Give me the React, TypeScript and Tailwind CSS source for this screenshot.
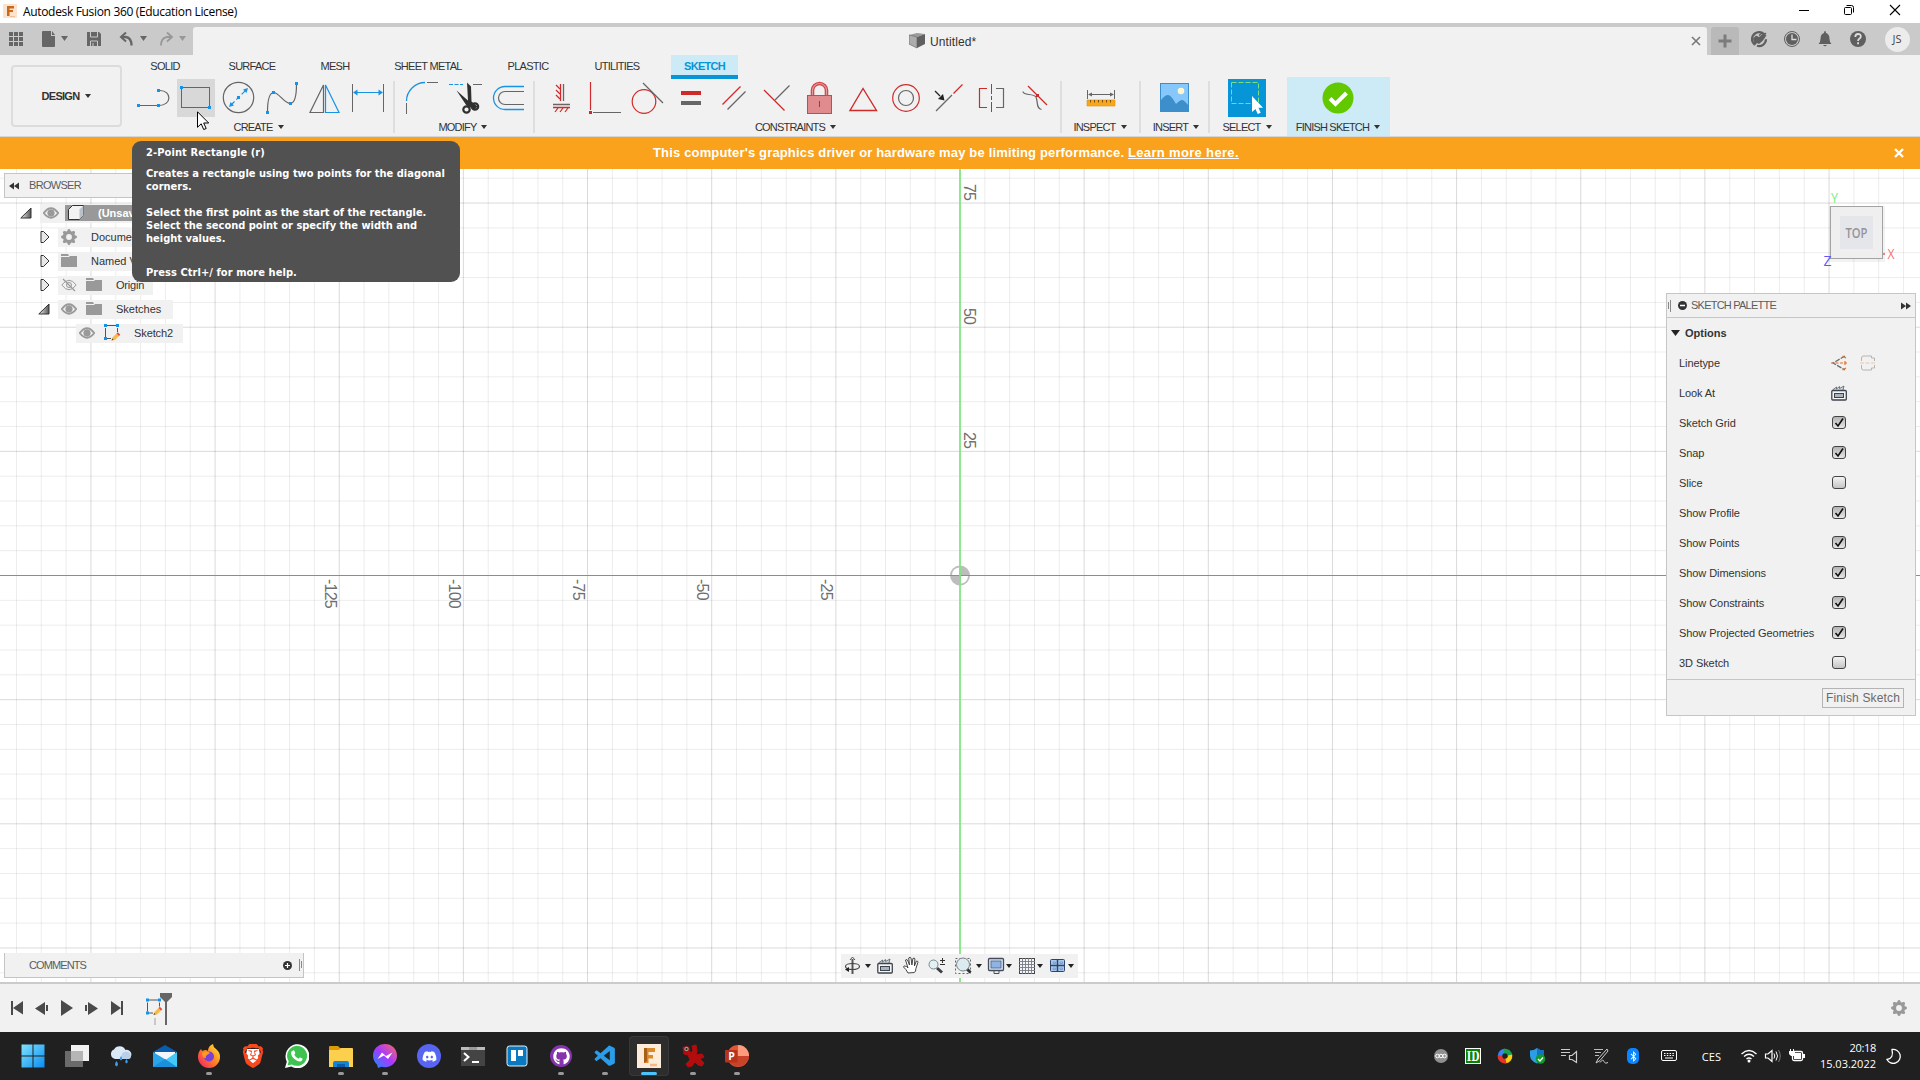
import type { ReactNode } from "react";
import { FaDiscord, FaGithub, FaBluetoothB } from "react-icons/fa6";
import { SiBrave } from "react-icons/si";
import { VscVscode } from "react-icons/vsc";
import { BsGearFill } from "react-icons/bs";

const GRAY = "#666666";
const BLUE = "#1793e6";
const RED = "#cf2a2a";

/** Icon whose viewBox [x, y, width, height] also sets its size. */
function Pic({ b, className, children }: { b: number[]; className?: string; children: ReactNode }) {
  return (
    <svg viewBox={b.join(" ")} width={b[2]} height={b[3]} fill="none" className={className ?? "block shrink-0"}>
      {children}
    </svg>
  );
}

function Sq({ x, y, c = BLUE }: { x: number; y: number; c?: string }) {
  return <rect x={x - 1.5} y={y - 1.5} width="3" height="3" fill={c} />;
}

function Caret({ className }: { className?: string }) {
  return (
    <svg viewBox="0 0 6 4" width="6" height="4" className={className ?? "fill-[#333]"}>
      <path d="M0 0h6L3 4z" />
    </svg>
  );
}

/* ---------- title bar and document tabs ---------- */

function TitleBar() {
  return (
    <div className="flex h-[23px] items-center bg-white pr-px">
      <Pic b={[0, 0, 23, 23]}>
        <rect x="3" y="4" width="14" height="14" fill="#fbe3cf" />
        <path d="M7 16V6h7v2.500H9.500V10h3.500v2H9.500v4z" fill="#c8691c" />
        <path d="M10 16.500h5" stroke="#eebf98" />
      </Pic>
      <span className="font-['Open_Sans',sans-serif] text-[12px] leading-none tracking-[-0.33px] text-black">Autodesk Fusion 360 (Education License)</span>
      <div className="ml-auto flex">
        <Pic b={[1781, 0, 46, 23]}><path d="M1799 10.500h10" stroke="#000" /></Pic>
        <Pic b={[1827, 0, 46, 23]}>
          <rect x="1844.500" y="7.500" width="7" height="7" rx="1" stroke="#000" />
          <path d="M1846.500 5.500h5q2 0 2 2v5" stroke="#000" />
        </Pic>
        <Pic b={[1873, 0, 46, 23]}><path d="M1890 5l10 10M1900 5l-10 10" stroke="#000" strokeWidth="1.100" /></Pic>
      </div>
    </div>
  );
}

function DocumentBar() {
  return (
    <div className="flex h-8 items-end bg-[#cacaca]">
      <Pic b={[0, 27, 32, 28]}>
        {[9, 14, 19].map((x) => [32, 37, 42].map((y) => <rect key={`${x}-${y}`} x={x} y={y} width="4" height="4" fill={GRAY} />))}
      </Pic>
      <Pic b={[32, 27, 43, 28]}>
        <path d="M43 31h8v5h4v10q0 1-1 1H43q-1 0-1-1V32q0-1 1-1zM52 31l3 4h-3z" fill={GRAY} />
        <path d="M61 36h7l-3.500 5z" fill={GRAY} />
      </Pic>
      <Pic b={[75, 27, 37, 28]}>
        <path d="M87 32h12l2 2v12H87z" fill={GRAY} />
        <path d="M90.500 32v5h7v-5M90.500 46v-5h7v5" stroke="#cacaca" />
        <path d="M93 43v3" stroke="#cacaca" />
      </Pic>
      <Pic b={[112, 27, 41, 28]}>
        <path d="M126 32.500l-5 4.500 5 4.500" stroke={GRAY} strokeWidth="2" />
        <path d="M121 37h5q5.500 1 5.500 8.500" stroke={GRAY} strokeWidth="2.300" />
        <path d="M140 36h7l-3.500 5z" fill={GRAY} />
      </Pic>
      <Pic b={[153, 27, 40, 28]}>
        <path d="M167 32.500l5 4.500-5 4.500" stroke="#989898" strokeWidth="1.800" />
        <path d="M172 37h-5q-6 1-6 8.500" stroke="#989898" strokeWidth="1.800" />
        <path d="M179 36h7l-3.500 5z" fill="#989898" />
      </Pic>
      <div className="flex h-7 w-[1514px] items-center rounded-t-[3px] bg-[#f1f1f1]">
        <div className="ml-[716px] flex items-center">
          <Pic b={[909, 33, 16, 16]}>
            <path d="M909 35l8-2 8 1-8 3z" fill="#9a9a9a" />
            <path d="M909 35l8 2v11l-8-4z" fill="#adadad" stroke="#6a6a6a" strokeWidth=".7" />
            <path d="M917 37l8-3v10l-8 4z" fill="#606060" />
          </Pic>
          <span className="ml-[5px] pt-px font-['Liberation_Sans',sans-serif] text-[12px] leading-none tracking-[0.1px] text-[#333]">Untitled*</span>
        </div>
        <Pic b={[1690, 35, 12, 12]} className="ml-auto mr-[5px] block"><path d="M1692 37l8 8M1700 37l-8 8" stroke="#777" strokeWidth="1.600" /></Pic>
      </div>
      <div className="ml-1 flex h-7 w-7 items-center justify-center rounded-t-[3px] bg-[#b9b9b9]">
        <Pic b={[0, 0, 14, 14]}><path d="M7 .5v13M.5 7h13" stroke="#7c7c7c" strokeWidth="3" /></Pic>
      </div>
      <div className="ml-1 flex">
        <Pic b={[1743, 27, 33, 28]}>
          <path d="M1754.500 44.500a7 7 0 1 1 11-8M1757 45.800a7 7 0 0 0 9-6.500" stroke="#5f5f5f" strokeWidth="2.200" />
          <path d="M1753 38.500l3-3 3 1.500 3.500-3 3 3-3 4-3.500 3-2-1-2.500 3z" fill="#5f5f5f" />
          <path d="M1761 37.500l5-4.500M1759 35.500l4-3.500" stroke="#5f5f5f" strokeWidth="1.400" />
        </Pic>
        <Pic b={[1776, 27, 33, 28]}>
          <circle cx="1792" cy="39" r="7.500" stroke="#5f5f5f" />
          <circle cx="1792" cy="39" r="6" fill="#5f5f5f" />
          <path d="M1792 34.500v5h4.500" stroke="#ddd" strokeWidth="1.300" />
        </Pic>
        <Pic b={[1809, 27, 33, 28]}>
          <path d="M1818.500 44q2-2 2-5 0-5 3.500-6 0-2 1-2t1 2q3.500 1 3.500 6 0 3 2 5zM1823 45h4q-2 2.500-4 0z" fill="#5f5f5f" />
        </Pic>
        <Pic b={[1842, 27, 33, 28]}>
          <circle cx="1858" cy="39" r="8" fill="#5f5f5f" />
          <path d="M1855.300 37q0-3 2.800-3t2.700 2.500q0 1.500-1.500 2.300-1.200.7-1.200 2.200M1858.100 42.300v2" stroke="#dedede" strokeWidth="1.800" />
        </Pic>
        <div className="flex w-[45px] items-start justify-center">
          <div className="-ml-px flex h-[25px] w-[25px] items-center justify-center rounded-full bg-[#ececec] font-['Open_Sans',sans-serif] text-[11px] text-[#444]">JS</div>
        </div>
      </div>
    </div>
  );
}

/* ---------- ribbon ---------- */

type Glyph = { b: number[]; hot?: boolean; art: ReactNode };

const createIcons: Glyph[] = [
  {
    b: [134, 79, 38, 38],
    art: (
      <>
        <path d="M138 105.500h21C172 105.500 172 90.500 160 90.500" stroke={GRAY} strokeWidth="1.200" />
        <Sq x={138.5} y={105.5} /><Sq x={158.5} y={90.5} /><Sq x={158.5} y={105.5} />
      </>
    ),
  },
  {
    b: [177, 79, 38, 38],
    hot: true,
    art: (
      <>
        <rect x="181.500" y="87.500" width="28" height="20" stroke={GRAY} />
        <Sq x={181.5} y={87.5} /><Sq x={209.5} y={107.5} />
      </>
    ),
  },
  {
    b: [220, 79, 38, 38],
    art: (
      <>
        <circle cx="238.500" cy="97.500" r="15.200" stroke={GRAY} strokeWidth="1.200" />
        <path d="M231 105l15-15" stroke={BLUE} strokeWidth="1.200" strokeDasharray="5 2.500" />
        <path d="M248 88l-1.500 5-3.500-3.500zM229 107l1.500-5 3.500 3.500z" fill={BLUE} />
        <Sq x={238.5} y={97.5} />
      </>
    ),
  },
  {
    b: [263, 79, 38, 38],
    art: (
      <>
        <path d="M267.500 112C267.500 98 270 93 273.500 92.500C279 92.500 284 103.500 290.500 103.500C295 103 296.500 95 296.500 84" stroke={GRAY} strokeWidth="1.200" />
        <Sq x={267.5} y={112.5} /><Sq x={273.5} y={92.5} /><Sq x={290.5} y={103.5} /><Sq x={296.5} y={83.5} />
      </>
    ),
  },
  {
    b: [306, 79, 38, 38],
    art: (
      <>
        <path d="M323.500 85v27.500h-13.500z" stroke={GRAY} strokeWidth="1.200" />
        <path d="M325.500 85v27.500H339z" stroke={BLUE} strokeWidth="1.200" />
      </>
    ),
  },
  {
    b: [349, 79, 38, 38],
    art: (
      <>
        <path d="M352.500 84v28M383.500 84v28" stroke={GRAY} />
        <path d="M355 92.500h26" stroke={BLUE} />
        <path d="M353 92.500l4.500-3v6zM383 92.500l-4.500-3v6z" fill={BLUE} />
      </>
    ),
  },
];

const modifyIcons: Glyph[] = [
  {
    b: [403, 79, 38, 38],
    art: (
      <>
        <path d="M406.500 101C406.500 91 415 82.500 425 82.500" stroke={BLUE} strokeWidth="1.300" />
        <path d="M427 82.500h11M406.500 103v11" stroke={GRAY} />
      </>
    ),
  },
  {
    b: [446, 79, 38, 38],
    art: (
      <>
        <path d="M449 84.500h14" stroke={BLUE} strokeDasharray="4 1.500" />
        <path d="M473 84.500h9" stroke={GRAY} />
        <path d="M456.500 90.500l11.500 10-1-18 4 4 .5 15 6 5-3 3-8-4z" fill="#303030" />
        <circle cx="466.500" cy="109.500" r="3.200" stroke="#303030" strokeWidth="2.200" />
        <circle cx="475" cy="106.500" r="3.200" stroke="#303030" strokeWidth="2.200" />
      </>
    ),
  },
  {
    b: [489, 79, 38, 38],
    art: (
      <>
        <path d="M524 86.500H505a11.500 11.500 0 0 0 0 23h19" stroke={BLUE} strokeWidth="1.300" />
        <path d="M524 91.500H505a6.500 6.500 0 0 0 0 13h19" stroke={GRAY} strokeWidth="1.200" />
      </>
    ),
  },
];

const constraintIcons: Glyph[] = [
  {
    b: [542, 79, 38, 38],
    art: (
      <>
        <path d="M560.500 84v17M553 107.500h17" stroke={RED} strokeWidth="1.300" />
        <path d="M563.500 84v17M553 104.500h17" stroke={GRAY} strokeWidth="1.300" />
        <path d="M556 85l4 4M556 90l4 4M556 95l4 4M558 108l-3 4M563 108l-3 4M568 108l-3 4" stroke={RED} strokeWidth="1.200" />
      </>
    ),
  },
  {
    b: [585, 79, 38, 38],
    art: (
      <>
        <path d="M590.500 82v28" stroke={RED} strokeWidth="1.200" />
        <path d="M593 112.500h28" stroke={GRAY} />
        <Sq x={590.5} y={112.5} c={RED} />
      </>
    ),
  },
  {
    b: [628, 79, 38, 38],
    art: (
      <>
        <circle cx="644" cy="101.500" r="11.800" stroke={RED} strokeWidth="1.200" />
        <path d="M643 83l20 20" stroke={GRAY} strokeWidth="1.200" />
      </>
    ),
  },
  {
    b: [671, 79, 38, 38],
    art: (
      <>
        <path d="M681 91h20v4h-20z" fill={RED} />
        <path d="M681 101h20v4h-20z" fill={GRAY} />
      </>
    ),
  },
  {
    b: [714, 79, 38, 38],
    art: (
      <>
        <path d="M722.500 104.500l18-18" stroke={RED} strokeWidth="1.200" />
        <path d="M727.500 109.500l18-18" stroke={GRAY} strokeWidth="1.200" />
      </>
    ),
  },
  {
    b: [757, 79, 38, 38],
    art: (
      <>
        <path d="M764 90l20.500 20.500" stroke={RED} strokeWidth="1.200" />
        <path d="M775 100l14.500-14.500" stroke={GRAY} strokeWidth="1.200" />
      </>
    ),
  },
  {
    b: [800, 79, 38, 38],
    art: (
      <>
        <path d="M812.500 95v-4.500a7 7 0 0 1 14 0V95" stroke="#cf4548" strokeWidth="3.600" />
        <path d="M812.500 95v-4.500a7 7 0 0 1 14 0V95" stroke="#e39a9b" strokeWidth="1.200" />
        <rect x="807.500" y="95.500" width="24" height="18" fill="#e08b8d" stroke="#cf4548" />
        <path d="M819.500 101v6" stroke="#a33" />
      </>
    ),
  },
  { b: [843, 79, 38, 38], art: <path d="M863 88.500l-13 22h26.500z" stroke={RED} strokeWidth="1.400" /> },
  {
    b: [886, 79, 38, 38],
    art: (
      <>
        <circle cx="906" cy="98" r="13.300" stroke={RED} strokeWidth="1.200" />
        <circle cx="906" cy="98" r="7.500" stroke={GRAY} strokeWidth="1.200" />
      </>
    ),
  },
  {
    b: [929, 79, 38, 38],
    art: (
      <>
        <path d="M953.500 93.500l9-9" stroke={RED} strokeWidth="1.200" />
        <path d="M936 111l16-16" stroke={GRAY} strokeWidth="1.200" />
        <path d="M935 91l5 5" stroke="#222" strokeWidth="1.300" />
        <path d="M944.500 100.500l-1.500-6.500-5 5z" fill="#222" />
      </>
    ),
  },
  {
    b: [972, 79, 38, 38],
    art: (
      <>
        <path d="M987 88.500h-7.500v19h7.500" stroke={RED} strokeWidth="1.200" />
        <path d="M991.500 84v10M991.500 96v4M991.500 102v10" stroke={RED} />
        <path d="M996 88.500h7.500v19H996" stroke={GRAY} strokeWidth="1.200" />
      </>
    ),
  },
  {
    b: [1015, 79, 38, 38],
    art: (
      <>
        <path d="M1028 86l19 19" stroke={RED} strokeWidth="1.200" />
        <path d="M1023 91.500C1023 96 1033 93 1036 97C1038 101 1036 109 1041.500 109.500" stroke={GRAY} strokeWidth="1.200" />
        <Sq x={1037.5} y={95.5} c={RED} />
      </>
    ),
  },
];

const inspectIcon: Glyph[] = [
  {
    b: [1081, 79, 38, 38],
    art: (
      <>
        <path d="M1087.500 90v9M1114.500 90v9M1090 94.500h22" stroke={GRAY} />
        <path d="M1088 94.500l4-2v4zM1114 94.500l-4-2v4z" fill={GRAY} />
        <path d="M1087 100h28v6h-28z" fill="#faa61a" stroke="#e09000" strokeWidth=".6" />
        <path d="M1090.500 100v2.500M1094.500 100v2.500M1098.500 100v2.500M1102.500 100v2.500M1106.500 100v2.500M1110.500 100v2.500" stroke="#6b4a10" strokeWidth=".9" />
      </>
    ),
  },
];

const insertIcon: Glyph[] = [
  {
    b: [1156, 79, 38, 38],
    art: (
      <>
        <rect x="1160.500" y="83.500" width="28" height="28" fill="#86c8fb" stroke="#3c8fca" />
        <path d="M1161 100q4-5 7-5t8 9q4-4 6-4t6 5v6.500h-27z" fill="#3c8fca" />
        <circle cx="1181" cy="91" r="3.300" fill="#fdf6cf" />
      </>
    ),
  },
];

const selectIcon: Glyph[] = [
  {
    b: [1228, 79, 38, 38],
    art: (
      <>
        <rect x="1228" y="79" width="38" height="38" fill="#0696d7" />
        <rect x="1231.500" y="82.500" width="27" height="21" stroke="#7be07b" strokeDasharray="5 2" />
        <path d="M1252 96v16l3.500-3 2.200 5 3-1.200-2.200-5h4.500z" fill="#fff" />
      </>
    ),
  },
];

const finishIcon: Glyph[] = [
  {
    b: [1319, 79, 38, 38],
    art: (
      <>
        <circle cx="1338" cy="98" r="15.500" fill="#62c800" />
        <path d="M1330 98.500l5.500 5.500 11-11" stroke="#fff" strokeWidth="4" />
      </>
    ),
  },
];

function Group({ icons, label, width, shift = "" }: { icons: Glyph[]; label: string; width: string; shift?: string }) {
  return (
    <div className={`flex shrink-0 flex-col items-center ${width}`}>
      <div className="flex h-[38px] gap-[5px]">
        {icons.map((g, i) => (
          <div key={i} className={g.hot ? "bg-[#d8d8d8]" : ""}>
            <Pic b={g.b}>{g.art}</Pic>
          </div>
        ))}
      </div>
      <div className={`mt-[5px] flex items-center gap-[5px] leading-none ${shift}`}>
        <span className="whitespace-nowrap font-['Liberation_Sans',sans-serif] text-[11px] leading-none tracking-[-0.8px] text-[#333]">{label}</span>
        <Caret className="mb-[2px] fill-[#333]" />
      </div>
    </div>
  );
}

function Sep({ className }: { className: string }) {
  return <div className={`mt-[2px] h-[52px] w-[2px] shrink-0 bg-[#dedede] ${className}`} />;
}

const tabs = [
  { t: "SOLID", c: "ml-0 w-[66px]" },
  { t: "SURFACE", c: "ml-[16px] w-[76px]" },
  { t: "MESH", c: "ml-[10px] w-[70px]" },
  { t: "SHEET METAL", c: "ml-[10px] w-[96px]" },
  { t: "PLASTIC", c: "ml-[14px] w-[76px]" },
  { t: "UTILITIES", c: "ml-[10px] w-[82px]" },
];

function Ribbon() {
  return (
    <div className="flex h-[82px] border-b border-[#d6d6d6] bg-[#f1f1f1]">
      <div className="w-[132px] shrink-0 pl-[11px] pt-[10px]">
        <div className="flex h-[62px] w-[111px] items-center justify-center gap-[6px] rounded-[4px] border-2 border-[#dcdcdc]">
          <span className="font-['Liberation_Sans',sans-serif] text-[11px] font-bold leading-none tracking-[-0.7px] text-[#333]">DESIGN</span>
          <Caret />
        </div>
      </div>
      <div className="min-w-0 flex-1">
        <div className="flex h-6 font-['Liberation_Sans',sans-serif] text-[11px] leading-none tracking-[-0.72px] text-[#333]">
          {tabs.map((x) => (
            <div key={x.t} className={`flex shrink-0 items-center justify-center pb-[2px] ${x.c}`}>{x.t}</div>
          ))}
          <div className="ml-[13px] flex h-6 w-[67px] items-center justify-center border-b-4 border-[#0696d7] bg-[#cdeaf7] pt-[2px] font-bold text-[#0696d7]">SKETCH</div>
        </div>
        <div className="flex">
          <Group icons={createIcons} label="CREATE" width="w-[257px]" shift="-ml-[4px]" />
          <Sep className="ml-[4px]" />
          <Group icons={modifyIcons} label="MODIFY" width="ml-[8px] w-[124px]" shift="-ml-[4px]" />
          <Sep className="ml-[6px]" />
          <Group icons={constraintIcons} label="CONSTRAINTS" width="ml-[7px] w-[511px]" shift="-ml-[4px]" />
          <Sep className="ml-[7px]" />
          <Group icons={inspectIcon} label="INSPECT" width="w-[76px]" />
          <Sep className="ml-px" />
          <Group icons={insertIcon} label="INSERT" width="-mr-px w-[68px]" shift="ml-[2px]" />
          <Sep className="" />
          <Group icons={selectIcon} label="SELECT" width="w-[74px]" />
          <div className="-mt-[2px] ml-[3px] h-[59px] w-[103px] bg-[#cdeaf7] pt-[2px]">
            <Group icons={finishIcon} label="FINISH SKETCH" width="w-[102px]" />
          </div>
        </div>
      </div>
    </div>
  );
}

function WarningBar() {
  return (
    <div className="flex h-8 items-center bg-[#faa21b] font-['Liberation_Sans',sans-serif] text-[13px] font-bold leading-none text-white">
      <span className="-mt-[2px] ml-[653px] whitespace-pre tracking-[0.16px]">This computer's graphics driver or hardware may be limiting performance. <span className="tracking-[0.34px] underline">Learn more here.</span></span>
      <Pic b={[0, 0, 10, 10]} className="ml-auto mr-[16px] block"><path d="M1 1l8 8M9 1l-8 8" stroke="#fff" strokeWidth="2.400" /></Pic>
    </div>
  );
}

/* ---------- sketch canvas ---------- */

const STEP = 24.83;
const columns = Array.from({ length: 77 }, (_, i) => i - 38);
const rows = Array.from({ length: 33 }, (_, i) => i - 16);

function GridCanvas() {
  return (
    <svg viewBox="0 169 1920 813" width="1920" height="813" className="block">
      <rect x="0" y="169" width="1920" height="813" fill="#fff" />
      {columns.map((n) => (
        <path key={n} d={`M${960 + n * STEP} 169v813`} stroke="#000" strokeOpacity={n % 5 ? 0.075 : 0.15} />
      ))}
      {rows.map((n) => (
        <path key={n} d={`M0 ${575.5 + n * STEP}h1920`} stroke="#000" strokeOpacity={n % 5 ? 0.075 : 0.15} />
      ))}
      <circle cx="960" cy="575.500" r="10" fill="#bdbdbd" />
      <path d="M959 567.500v7.500h-7a7.500 7.500 0 0 1 7-7.500zM961 583.500v-7.500h7a7.500 7.500 0 0 1-7 7.500z" fill="#fff" />
      <path d="M0 575.500h1920" stroke="#dc6a6a" />
      <path d="M960 169v813" stroke="#7fe87f" strokeWidth="2" strokeOpacity=".85" />
      <g fill="#6e6e6e" fontFamily="Liberation Sans, sans-serif" fontSize="16" letterSpacing="-0.8">
        <text transform="translate(964 184) rotate(90)">75</text>
        <text transform="translate(964 308) rotate(90)">50</text>
        <text transform="translate(964 432) rotate(90)">25</text>
        <text transform="translate(821 579) rotate(90)">-25</text>
        <text transform="translate(697 579) rotate(90)">-50</text>
        <text transform="translate(573 579) rotate(90)">-75</text>
        <text transform="translate(449 579) rotate(90)">-100</text>
        <text transform="translate(325 579) rotate(90)">-125</text>
      </g>
    </svg>
  );
}

function Eye({ off }: { off?: boolean }) {
  return (
    <Pic b={[0, 0, 16, 16]}>
      <path d="M.8 8Q8-1.500 15.200 8 8 17.500.8 8z" stroke="#999" strokeWidth={off ? 1 : 2} />
      <circle cx="8" cy="8" r={off ? 2.5 : 3.2} fill={off ? "none" : "#999"} stroke="#999" />
      {off && <path d="M2 2l12 12" stroke="#999" strokeWidth="1.200" />}
    </Pic>
  );
}

function Folder() {
  return (
    <Pic b={[0, 0, 16, 14]}>
      <path d="M0 0h7l1 2H0zM0 3h8l1 -1h7v11H0z" fill="#999" />
    </Pic>
  );
}

function SketchArt() {
  return (
    <>
      <path d="M2.500 4v9M4 1.500h9M14.500 4v4M4 14.500h4" stroke="#555" />
      <Sq x={2.5} y={1.5} /><Sq x={14.5} y={1.5} /><Sq x={2.5} y={14.5} />
      <path d="M8.500 16.500l1-3 4-4 2.500 2.500-4 4z" fill="#f8b84a" />
      <path d="M13.500 9.500l1.300-1.300 2.500 2.500L16 12z" fill="#e8434a" />
      <path d="M8.500 16.500l.8-2 1.300 1.300z" fill="#444" />
    </>
  );
}

function Open() {
  return (
    <svg viewBox="0 0 12 12" width="12" height="12">
      <defs><linearGradient id="tri" x1="0" x2="1"><stop offset="0" stopColor="#eee" /><stop offset="1" stopColor="#555" /></linearGradient></defs>
      <path d="M11 1v10H.8z" fill="url(#tri)" stroke="#333" />
    </svg>
  );
}

function Closed() {
  return (
    <svg viewBox="0 0 10 14" width="10" height="14">
      <path d="M1 1.500h2.500L9 7l-5.500 5.500H1z" fill="#e8e8e8" stroke="#333" />
    </svg>
  );
}

function Row({ indent, toggle, bg, children }: { indent: string; toggle: ReactNode; bg: string; children: ReactNode }) {
  return (
    <div className="flex h-6 items-center">
      <div className={`flex shrink-0 items-center ${indent}`}>{toggle}</div>
      <div className={`flex h-[19px] items-center overflow-hidden whitespace-nowrap bg-[#f1f1f1] ${bg}`}>{children}</div>
    </div>
  );
}

function Browser() {
  return (
    <div className="absolute left-0 top-[4px] w-[304px] font-['Liberation_Sans',sans-serif] text-[11px] leading-none text-[#333]">
      <div className="ml-1 flex h-[25px] items-center border border-[#c4c4c4] bg-[#f1f1f1] pl-[4px]">
        <Pic b={[0, 0, 10, 8]}><path d="M5 .5v7L0 4zM10 .5v7L5 4z" fill="#333" /></Pic>
        <span className="ml-[10px] tracking-[-0.7px] text-[#5c5c5c]">BROWSER</span>
      </div>
      <div className="pt-[3px]">
        <Row indent="w-10 pl-5" toggle={<Open />} bg="w-[92px] pl-[3px]">
          <Eye />
          <div className="ml-[6px] flex h-4 min-w-0 flex-1 items-center bg-[#999] pl-[3px]">
            <Pic b={[0, 0, 16, 16]}><path d="M.5 4.500l4-4h11v10l-4 4H.5z" fill="#f3f3f3" stroke="#333" /><path d="M11.500 14.500v-10l4-4v10z" fill="#b9c0c8" /></Pic>
            <span className="ml-[14px] font-bold text-white">(Unsaved)</span>
          </div>
        </Row>
        <Row indent="w-[58px] pl-10" toggle={<Closed />} bg="w-[74px] pl-[3px]">
          <BsGearFill size={16} color="#999" className="shrink-0" /><span className="ml-[14px]">Document Settings</span>
        </Row>
        <Row indent="w-[58px] pl-10" toggle={<Closed />} bg="w-[74px] pl-[3px]">
          <Folder /><span className="ml-[14px]">Named Views</span>
        </Row>
        <Row indent="w-[58px] pl-10" toggle={<Closed />} bg="w-[95px] pl-[3px]">
          <Eye off /><div className="ml-[9px]"><Folder /></div><span className="ml-[14px] tracking-[-0.2px]">Origin</span>
        </Row>
        <Row indent="w-[58px] pl-[38px]" toggle={<Open />} bg="w-[115px] pl-[3px]">
          <Eye /><div className="ml-[9px]"><Folder /></div><span className="ml-[14px]">Sketches</span>
        </Row>
        <Row indent="w-[76px]" toggle={null} bg="w-[107px] pl-[3px]">
          <Eye /><div className="ml-[8px]"><Pic b={[0, 0, 18, 18]}><SketchArt /></Pic></div><span className="ml-[13px] tracking-[-0.1px]">Sketch2</span>
        </Row>
      </div>
    </div>
  );
}

function Check({ on }: { on: boolean }) {
  return (
    <div className={`-mt-px h-[13px] w-[14px] rounded-[3px] border border-[#444] bg-gradient-to-b ${on ? "from-[#b4b4b4] to-[#e6e6e6]" : "from-[#f4f4f4] to-[#c4c4c4]"}`}>
      {on && <Pic b={[0, 0, 12, 11]}><path d="M2.500 6l2.500 3L10 1.500" stroke="#111" strokeWidth="1.600" /></Pic>}
    </div>
  );
}

function LookAt() {
  return (
    <Pic b={[0, 0, 16, 16]}>
      <path d="M1.500 5l4-3 0 2 3-2.500v2L13 1l-1 4" fill="#cfd6dc" stroke="#555d66" strokeWidth=".8" />
      <rect x=".8" y="5.500" width="14.500" height="9.500" rx="1" fill="#f6f6f6" stroke="#3e444d" strokeWidth="1.300" />
      <rect x="3.500" y="8.500" width="9" height="4" fill="#a9b4be" stroke="#3e444d" />
    </Pic>
  );
}

const options: [string, boolean][] = [
  ["Sketch Grid", true],
  ["Snap", true],
  ["Slice", false],
  ["Show Profile", true],
  ["Show Points", true],
  ["Show Dimensions", true],
  ["Show Constraints", true],
  ["Show Projected Geometries", true],
  ["3D Sketch", false],
];

function Palette() {
  return (
    <div className="absolute left-[1666px] top-[124px] h-[423px] w-[250px] border border-[#c6c6c6] bg-[#f1f1f1] font-['Liberation_Sans',sans-serif] text-[11px] leading-none text-[#333]">
      <div className="flex h-6 items-center border-b border-[#c6c6c6] pl-[1px] pr-[4px]">
        <Pic b={[0, 0, 4, 12]}><path d="M.5 2v7M2.500 0v12" stroke="#888" /></Pic>
        <Pic b={[0, 0, 9, 9]} className="ml-[6px] block"><circle cx="4.500" cy="4.500" r="4.500" fill="#333" /><path d="M2 4.500h5" stroke="#fff" strokeWidth="1.500" /></Pic>
        <span className="ml-1 tracking-[-0.77px] text-[#5c5c5c]">SKETCH PALETTE</span>
        <Pic b={[0, 0, 10, 8]} className="ml-auto block"><path d="M0 .5v7L5 4zM5 .5v7L10 4z" fill="#333" /></Pic>
      </div>
      <div className="flex h-[30px] items-center pl-1">
        <Pic b={[0, 0, 9, 6]}><path d="M0 0h9L4.500 6z" fill="#222" /></Pic>
        <span className="ml-[5px] font-bold">Options</span>
      </div>
      <div className="flex h-[30px] items-center pl-3">
        <span className="w-[152px] tracking-[-0.08px]">Linetype</span>
        <Pic b={[0, 0, 16, 16]}><path d="M14 1L2 8l12 7" stroke="#6a6a6a" strokeWidth="1.200" strokeDasharray="5 1.200" /><path d="M0 8h16" stroke="#e8691a" strokeWidth="1.200" strokeDasharray="3 1.500" /><path d="M11.500 1l3.500 2M11.500 15l3.500-2M14 6v4" stroke="#e8691a" strokeWidth="1.100" /></Pic>
        <Pic b={[0, 0, 16, 16]} className="ml-[13px] block"><path d="M1.500 6V3q0-2 2-2h8v2h3v3M1.500 10v3q0 2 2 2h8v-2h3v-3" stroke="#b4b4b4" /><path d="M0 8h16" stroke="#f6c49c" strokeDasharray="4 1.500" /></Pic>
      </div>
      <div className="flex h-[30px] items-center pl-3">
        <span className="w-[152px] tracking-[-0.1px]">Look At</span>
        <LookAt />
      </div>
      {options.map(([t, on]) => (
        <div key={t} className="flex h-[30px] items-center pl-3">
          <div className="w-[153px] tracking-[-0.07px]">{t}</div>
          <Check on={on} />
        </div>
      ))}
      <div className="mt-[1px] flex h-[37px] items-center justify-end border-t border-[#c6c6c6] pr-[11px]">
        <div className="flex h-5 w-[82px] items-center justify-center border border-[#b4b4b4] text-[12px] tracking-[0.15px] text-[#6a6a6a]">Finish Sketch</div>
      </div>
    </div>
  );
}

function ViewCube() {
  return (
    <div className="absolute left-[1820px] top-[20px]">
      <Pic b={[1820, 189, 80, 85]}>
        <rect x="1829" y="206" width="56" height="56" fill="#000" opacity=".05" />
        <rect x="1830.500" y="206.500" width="52" height="52" fill="#efefef" stroke="#a3a3a3" />
        <rect x="1840" y="216" width="33" height="33" fill="#e5e6ea" />
        <g fontFamily="Open Sans, sans-serif" textAnchor="middle">
          <text x="1856.500" y="237.500" fontSize="14" fontWeight="600" fill="#93949b" textLength="22" lengthAdjust="spacingAndGlyphs">TOP</text>
          <text x="1834.500" y="203" fontSize="14" fill="#78f078" textLength="7" lengthAdjust="spacingAndGlyphs">Y</text>
          <text x="1891" y="259" fontSize="14" fill="#f57272" textLength="7" lengthAdjust="spacingAndGlyphs">X</text>
          <text x="1827.500" y="266" fontSize="14" fill="#5c5cf8" textLength="8" lengthAdjust="spacingAndGlyphs">Z</text>
        </g>
        <path d="M1883 254h2" stroke="#f58080" strokeWidth="2" />
      </Pic>
    </div>
  );
}

function Comments() {
  return (
    <div className="absolute left-1 top-[784px] flex h-[25px] w-[300px] items-center border border-t-0 border-[#c4c4c4] bg-[#f1f1f1] pl-[24px] font-['Liberation_Sans',sans-serif] text-[11px] leading-none tracking-[-0.9px] text-[#5c5c5c]">
      <span>COMMENTS</span>
      <Pic b={[0, 0, 9, 9]} className="ml-auto block"><circle cx="4.500" cy="4.500" r="4.500" fill="#333" /><path d="M2 4.500h5M4.500 2v5" stroke="#fff" strokeWidth="1.200" /></Pic>
      <Pic b={[0, 0, 4, 12]} className="ml-[7px] block"><path d="M.5 0v12M2.500 2v7" stroke="#888" /></Pic>
    </div>
  );
}

function NavBar() {
  return (
    <div className="absolute left-[841px] top-[785px] flex h-6 w-[237px] bg-[#f1f1f1]">
      <Pic b={[841, 954, 33, 24]}>
        <path d="M852.500 959v15" stroke="#555" strokeWidth="2" /><path d="M850 960l2.500-3 2.500 3" stroke="#555" />
        <ellipse cx="852.500" cy="966.500" rx="7" ry="3" stroke="#444" strokeWidth="1.200" />
        <path d="M845 969.500l4-2.500v5z" fill="#222" /><path d="M865 964h6l-3 4z" fill="#222" />
      </Pic>
      <div className="flex w-[24px] items-center pl-[3px]"><LookAt /></div>
      <Pic b={[898, 954, 26, 24]}>
        <path d="M908 973q-2-4-4.500-6 0-2 3-.5l1.500 1.500-2.500-8q1.500-1.500 2.500 1l1.500 4-.8-7q1.800-1.500 2.300 0l.9 7 1-6.500q2-1 2 .5l-.5 7 2-5q2 0 1.500 1.500l-2 6q0 3-1.500 4z" fill="#fff" stroke="#444" />
      </Pic>
      <Pic b={[924, 954, 27, 24]}>
        <path d="M937 968l5 4.500" stroke="#3a3f48" strokeWidth="3" /><circle cx="933.500" cy="964.500" r="4.500" fill="#e2f1f4" stroke="#7b8a92" />
        <path d="M942.500 958v5M940 960.500h5M940 964.500h5" stroke="#333" />
      </Pic>
      <Pic b={[951, 954, 33, 24]}>
        <rect x="955.500" y="958.500" width="15" height="15" stroke="#666" strokeDasharray="2 2" />
        <path d="M966 968l4.500 4.500" stroke="#333" strokeWidth="3" /><circle cx="963" cy="964.500" r="6.500" fill="#dcebed" stroke="#77858c" /><path d="M976 964h6l-3 4z" fill="#222" />
      </Pic>
      <Pic b={[984, 954, 31, 24]}>
        <rect x="988.500" y="958.500" width="15" height="12" rx="1" fill="#dfe6f0" stroke="#444c5c" strokeWidth="1.300" /><rect x="991" y="961" width="10" height="7" fill="#8fb4e2" stroke="#3f5f95" strokeWidth=".8" />
        <path d="M994 971v2.500h5V971" stroke="#444c5c" /><path d="M1006 964h6l-3 4z" fill="#222" />
      </Pic>
      <Pic b={[1015, 954, 31, 24]}>
        <rect x="1019.500" y="958.500" width="15" height="15" fill="#f6f6f8" stroke="#444" />
        <path d="M1022.500 958v16M1025.500 958v16M1028.500 958v16M1031.500 958v16M1019 961.500h16M1019 964.500h16M1019 967.500h16M1019 970.500h16" stroke="#777b88" strokeWidth=".9" /><path d="M1037 964h6l-3 4z" fill="#222" />
      </Pic>
      <Pic b={[1046, 954, 32, 24]}>
        <rect x="1050.500" y="959.500" width="14" height="12" rx="1" fill="#a9c8ee" stroke="#2f4468" />
        <path d="M1057.500 959v13M1050 965.500h15" stroke="#2f4468" strokeWidth="1.500" />
        <path d="M1053 962h2.500v1.500H1053zM1060 962h2.500v1.500h-2.500zM1053 968h2.500v1.500H1053zM1060 968h2.500v1.500h-2.500z" stroke="#6f98cf" strokeWidth=".8" /><path d="M1068 964h6l-3 4z" fill="#222" />
      </Pic>
    </div>
  );
}

function Tooltip() {
  return (
    <div className="absolute left-[132px] top-[141px] h-[141px] w-[328px] rounded-[9px] bg-[#515151] pl-[14px] pt-[5px] font-['DejaVu_Sans_Condensed','DejaVu_Sans',sans-serif] text-[11px] font-bold leading-[13px] text-white [font-stretch:condensed]">
      <p className="tracking-[0.1px]">2-Point Rectangle (r)</p>
      <p className="mt-[8px] whitespace-nowrap">Creates a rectangle using two points for the diagonal<br />corners.</p>
      <p className="mt-[13px] whitespace-nowrap">Select the first point as the start of the rectangle.<br />Select the second point or specify the width and<br />height values.</p>
      <p className="mt-[21px] tracking-[0.06px]">Press Ctrl+/ for more help.</p>
    </div>
  );
}

/* ---------- timeline and taskbar ---------- */

function Timeline() {
  return (
    <div className="flex h-[50px] items-start border-t-2 border-[#cbcbcb] bg-[#f1f1f1]">
      <Pic b={[0, 984, 180, 48]}>
        <g fill="#4a4a4a">
          <path d="M11 1001h2v14h-2zM23 1001v13.500l-10-6.500z" />
          <path d="M45 1002v13l-10-6.500zM46 1005h2v6h-2z" />
          <path d="M61 1000v16l12-8z" />
          <path d="M88 1002v13l10-6.500zM85 1005h2v6h-2z" />
          <path d="M111 1001v14l10-7zM121 1001h2v14h-2z" />
        </g>
        <g transform="translate(145 998.500)"><SketchArt /></g>
        <path d="M155 1018v7" stroke="#c8c8c8" strokeWidth="2" />
        <path d="M160 993h12v4l-5 5h-2l-5-5z" fill="#666" />
        <path d="M166 1000v25" stroke="#666" strokeWidth="2" />
      </Pic>
      <BsGearFill size={16} color="#999" className="ml-auto mr-[13px] mt-4" />
    </div>
  );
}

function TaskButton({ running, active, children }: { running?: boolean; active?: boolean; children: ReactNode }) {
  return (
    <div className={`relative mx-[2px] flex h-10 w-10 items-center justify-center rounded ${active ? "bg-[#2d2d2d] ring-1 ring-inset ring-[#383838]" : ""}`}>
      {children}
      {running && <span className="absolute bottom-[1px] h-[3px] w-[6px] rounded-full bg-[#999]" />}
      {active && <span className="absolute bottom-[1px] h-[3px] w-4 rounded-full bg-[#4cc2ff]" />}
    </div>
  );
}

function Taskbar() {
  return (
    <div className="flex h-12 items-center bg-[#202020] pl-[11px] text-white">
      <TaskButton><Pic b={[0, 0, 24, 24]}><defs><linearGradient id="win" x2="1" y2="1"><stop stopColor="#7fe3ff" /><stop offset="1" stopColor="#0a8cf0" /></linearGradient></defs><path d="M.5.500h11v11H.5zM12.500.500h11v11h-11zM.5 12.500h11v11H.5zM12.500 12.500h11v11h-11z" fill="url(#win)" /></Pic></TaskButton>
      <TaskButton><Pic b={[0, 0, 24, 24]}><path d="M6 1h18v16H6z" fill="#f2f2f2" /><path d="M0 7h18v16H0z" fill="#6b6b6b" /><path d="M6 7h12v10H6z" fill="#b5b5b5" /></Pic></TaskButton>
      <TaskButton><Pic b={[0, 0, 24, 24]}><path d="M6 15a5 5 0 0 1-1-9.500A6.500 6.500 0 0 1 16.500 6 4.500 4.500 0 0 1 19 15z" fill="#dbe8f6" /><path d="M14 15a4 4 0 0 1 1-7 5 5 0 0 1 7 4 3 3 0 0 1-2 3z" fill="#b9d0ea" /><path d="M12 12q2.500 3.500 0 4.500-2.500-1 0-4.500zM7.500 17q3 4 0 5.500-3-1.500 0-5.500zM17.500 15q2.500 3.500 0 4.500-2.500-1 0-4.500z" fill="#3f9be8" /></Pic></TaskButton>
      <TaskButton><Pic b={[0, 0, 24, 24]}><path d="M0 8l12-7 12 7v4H0z" fill="#0b5cab" /><path d="M2 8h20v9H2z" fill="#f4f7fa" /><path d="M0 8l15 9-5 6H0z" fill="#2aa5ea" /><path d="M24 8L8 19l6 4h10z" fill="#45c8f5" /><path d="M0 23l12-8 12 8z" fill="#1b8fdc" /></Pic></TaskButton>
      <TaskButton running><Pic b={[0, 0, 24, 24]}><defs><linearGradient id="fox" x1="1" x2="0" y2="1"><stop stopColor="#fff04a" /><stop offset=".45" stopColor="#ff8a1e" /><stop offset="1" stopColor="#f2146e" /></linearGradient></defs><path d="M1 13q0-5 3-8l1 2q2-1 4-1l2 1q0-5 5-7 0 3 3 5 4 3 4 8a11 11 0 0 1-22 0z" fill="url(#fox)" /><circle cx="12" cy="12.500" r="5" fill="#7a3fd4" /><path d="M5 9q5-3 8 0l-3 2q-2 1-1 3-4 0-4-5z" fill="#ff9a22" /></Pic></TaskButton>
      <TaskButton>
        <div className="grid place-items-center">
          <Pic b={[0, 0, 24, 24]} className="col-start-1 row-start-1 block"><path d="M6 5h12l1 6-2 6-5 4-5-4-2-6z" fill="#fff" /></Pic>
          <SiBrave size={24} color="#f8481e" className="col-start-1 row-start-1" />
        </div>
      </TaskButton>
      <TaskButton><Pic b={[0, 0, 24, 24]}><path d="M0 24l1.800-6.300A12 12 0 1 1 6.300 22.500z" fill="#fff" /><path d="M2.500 21.500l1.200-4.200a10 10 0 1 1 3.200 3.100z" fill="#3ec250" /><path d="M8 6.500q1-.5 1.500.5l.8 2q0 .6-1 1.700 1.500 3 4.300 4 .8-1.300 1.400-1.300l2.500 1.200q.2 2.500-2.700 3-3-.2-6-3-2.800-3-2.800-5.500 0-1.800 2-2.600z" fill="#fff" /></Pic></TaskButton>
      <TaskButton running><Pic b={[0, 0, 24, 24]}><path d="M0 3q0-1 1-1h8l2 2v4H0z" fill="#dd9a06" /><path d="M0 6h10l1.500-2H23q1 0 1 1v18H0z" fill="#fcd04c" /><path d="M4 23v-4q0-2 2-2h12q2 0 2 2v4z" fill="#1483d8" /><path d="M8 20h8v3H8z" fill="#0a5ca8" /></Pic></TaskButton>
      <TaskButton running>
        <svg width="24" height="24" viewBox="0 0 24 24">
          <defs><linearGradient id="msg" x1="1" x2="0" y2="1"><stop stopColor="#ff6a60" /><stop offset=".5" stopColor="#a838ff" /><stop offset="1" stopColor="#1090ff" /></linearGradient></defs>
          <path d="M12 0c6.800 0 12 4.900 12 11.600s-5.200 11.600-12 11.600c-1.300 0-2.500-.2-3.600-.5L5 24l-1-3.500C1.500 18.400 0 15.300 0 11.600 0 4.900 5.200 0 12 0z" fill="url(#msg)" />
          <path d="M4.500 15l4.500-6.500 4 3.500 6.500-3.500-4.500 6.500-4-3.500z" fill="#fff" />
        </svg>
      </TaskButton>
      <TaskButton><div className="flex h-6 w-6 items-center justify-center rounded-full bg-[#5865f2]"><FaDiscord size={15} /></div></TaskButton>
      <TaskButton><Pic b={[0, 0, 24, 24]}><rect y="3" width="24" height="19" fill="#444" /><path d="M0 3h24v3H0z" fill="#bbb" /><path d="M8 3h8v3H8z" fill="#999" /><path d="M3 9l4.500 4L3 17M11 18h7" stroke="#fff" strokeWidth="2" /></Pic></TaskButton>
      <TaskButton><Pic b={[0, 0, 24, 24]}><rect x="2" y="2" width="20" height="20" rx="2.500" fill="#0a79bf" stroke="#e6f2fa" /><path d="M6 6h5v11H6zM13 6h5v6h-5z" fill="#fff" /></Pic></TaskButton>
      <TaskButton running><div className="flex h-[22px] w-[22px] items-center justify-center rounded-full bg-[#8534ad]"><FaGithub size={17} /></div></TaskButton>
      <TaskButton running><VscVscode size={25} color="#2a9ce8" /></TaskButton>
      <TaskButton active><Pic b={[0, 0, 24, 24]}><path d="M0 0h24v24H0z" fill="#fdecd9" /><path d="M7 19V4h11v4h-6.500v3H16v3.500h-4.500V19z" fill="#d98a2c" /><path d="M7 19V4h3v13z" fill="#a95f14" /><path d="M13 21h7" stroke="#f0b98a" strokeWidth="2.500" /></Pic></TaskButton>
      <TaskButton running><Pic b={[0, 0, 24, 24]}><path d="M2 3l4 1 3 4q2 1 3-1l-1-5 4-1 1 6-1 4 6-1 2 3-4 2 4 4-2 3-4-1-3-3-3 4-4 1-2-3 4-4-2-5-4-1z" fill="#b30c0c" stroke="#b30c0c" strokeLinejoin="round" /><circle cx="5.500" cy="5" r="2.800" fill="#999" stroke="#a00" /><circle cx="5.500" cy="5" r="1" fill="#222" /></Pic></TaskButton>
      <TaskButton running><Pic b={[0, 0, 24, 24]}><circle cx="13" cy="12" r="11" fill="#e0583a" /><path d="M13 1a11 11 0 0 1 11 11H13z" fill="#ff9a7c" /><path d="M2 12h22a11 11 0 0 1-21 4z" fill="#c8432a" /><rect y="6" width="12.500" height="12.500" rx="1" fill="#b7331c" /><text x="3.300" y="16" fill="#fff" fontSize="10.500" fontWeight="700" fontFamily="Open Sans, sans-serif">P</text></Pic></TaskButton>

      <div className="ml-auto flex items-center pr-[15px]">
        <Pic b={[1425, 1040, 32, 32]}><circle cx="1441" cy="1056" r="7" fill="#8f8f8f" /><circle cx="1437.500" cy="1056" r="1.800" stroke="#fff" /><circle cx="1441" cy="1056" r="1.800" stroke="#fff" /><circle cx="1444.500" cy="1056" r="1.800" stroke="#fff" /></Pic>
        <Pic b={[1457, 1040, 32, 32]}><rect x="1465.500" y="1048.500" width="15" height="15" fill="#0a830a" stroke="#fff" /><text x="1466.800" y="1060.500" fill="#fff" fontSize="12" fontWeight="700" fontFamily="DejaVu Serif, serif" textLength="12.500" lengthAdjust="spacingAndGlyphs">ID</text></Pic>
        <Pic b={[1489, 1040, 32, 32]}>
          <g strokeWidth="4.500"><path d="M1500 1056a5 5 0 0 1 5-5" stroke="#3b82f0" /><path d="M1504 1051a5 5 0 0 1 6 5" stroke="#18a34a" /><path d="M1510 1055a5 5 0 0 1-5 6" stroke="#ffcc10" /><path d="M1506 1061a5 5 0 0 1-6-5.500" stroke="#e5352b" /></g>
        </Pic>
        <Pic b={[1521, 1040, 32, 32]}><path d="M1537 1048q3 2.500 7 2.500v5q0 5-7 8-7-3-7-8v-5q4 0 7-2.500z" fill="#2a9fe8" /><path d="M1537 1048q3 2.500 7 2.500v5h-7z" fill="#1470c8" /><circle cx="1540.500" cy="1059" r="4.800" fill="#129a2c" /><path d="M1538 1059l2 2 3-3.500" stroke="#fff" strokeWidth="1.300" /></Pic>
        <Pic b={[1553, 1040, 32, 32]}><path d="M1561 1049.500h9M1561 1052.500h9M1561 1055.500h5" stroke="#ccc" strokeWidth="1.200" /><path d="M1569.500 1055.500h2.500l4.500-4v11l-4.500-3h-2.500z" stroke="#ccc" strokeWidth="1.200" /></Pic>
        <Pic b={[1585, 1040, 32, 32]}><path d="M1594 1049.500h9M1595 1052.500h6M1595 1055.500h4" stroke="#bbb" /><path d="M1607 1049l-9 10-2 4 4-2.500 8-9.500zM1600 1062.500q3-4 4-1t4 1" stroke="#ccc" /></Pic>
        <div className="flex w-8 justify-center"><div className="flex h-4 w-3 items-center justify-center rounded-[5px] bg-[#0a84ff]"><FaBluetoothB size={11} /></div></div>
        <Pic b={[1649, 1040, 40, 32]}><rect x="1661.500" y="1050.500" width="15" height="10" rx="1.500" stroke="#fff" /><path d="M1664 1053.500h10M1664 1055.500h10" stroke="#fff" strokeDasharray="1.500 1.300" /><path d="M1665 1058h8" stroke="#fff" /></Pic>
        <div className="w-11 pl-px text-center font-['Open_Sans',sans-serif] text-[11px] leading-none tracking-[0.2px]">CES</div>
        <div className="ml-1 flex">
          <Pic b={[1737, 1040, 24, 32]}><path d="M1741.500 1054q7.500-7 15 0M1744 1056.500q5-4.500 10 0M1746.500 1059q2.500-2 5 0" stroke="#fff" strokeWidth="1.400" /><circle cx="1749" cy="1061" r="1.500" fill="#fff" /></Pic>
          <Pic b={[1761, 1040, 24, 32]}><path d="M1765.500 1054h2.500l4-3.500v11l-4-3.500h-2.500z" stroke="#fff" strokeWidth="1.200" /><path d="M1774 1053.500q1.500 2.500 0 5M1776 1051.500q3 4.500 0 9" stroke="#fff" /><path d="M1778.500 1050q3.500 6 0 12" stroke="#777" /></Pic>
          <Pic b={[1785, 1040, 24, 32]}><rect x="1792.500" y="1051.500" width="10" height="9" rx="1.500" stroke="#fff" strokeWidth="1.300" /><path d="M1794 1053h7v6h-7zM1803 1054h2v4h-2zM1789 1051h6v3l-2 2h-2l-2-2zM1790 1049h1v2h-1zM1793 1049h1v2h-1z" fill="#fff" /></Pic>
        </div>
        <div className="w-[67px] text-right font-['Open_Sans',sans-serif] text-[11px] leading-4"><span className="tracking-[-0.3px]">20:18</span><br />15.03.2022</div>
        <Pic b={[1881, 1040, 29, 32]} className="-mr-[5px] ml-[5px] block"><path d="M1892 1049.500a7 7 0 1 1-5 10q7-1 5-10z" stroke="#fff" strokeWidth="1.300" /></Pic>
      </div>
    </div>
  );
}

export default function App() {
  return (
    <div className="relative flex h-[1080px] w-[1920px] flex-col overflow-hidden">
      <TitleBar />
      <DocumentBar />
      <Ribbon />
      <WarningBar />
      <div className="relative h-[813px] shrink-0">
        <GridCanvas />
        <Browser />
        <ViewCube />
        <Palette />
        <Comments />
        <NavBar />
      </div>
      <Timeline />
      <Taskbar />
      <Tooltip />
      <Pic b={[0, 0, 13, 20]} className="absolute left-[197px] top-[111px] block"><path d="M.5.800v15.500l3.700-3.500 2.500 5.700 2.500-1-2.500-5.500h5z" fill="#fff" stroke="#000" /></Pic>
    </div>
  );
}
